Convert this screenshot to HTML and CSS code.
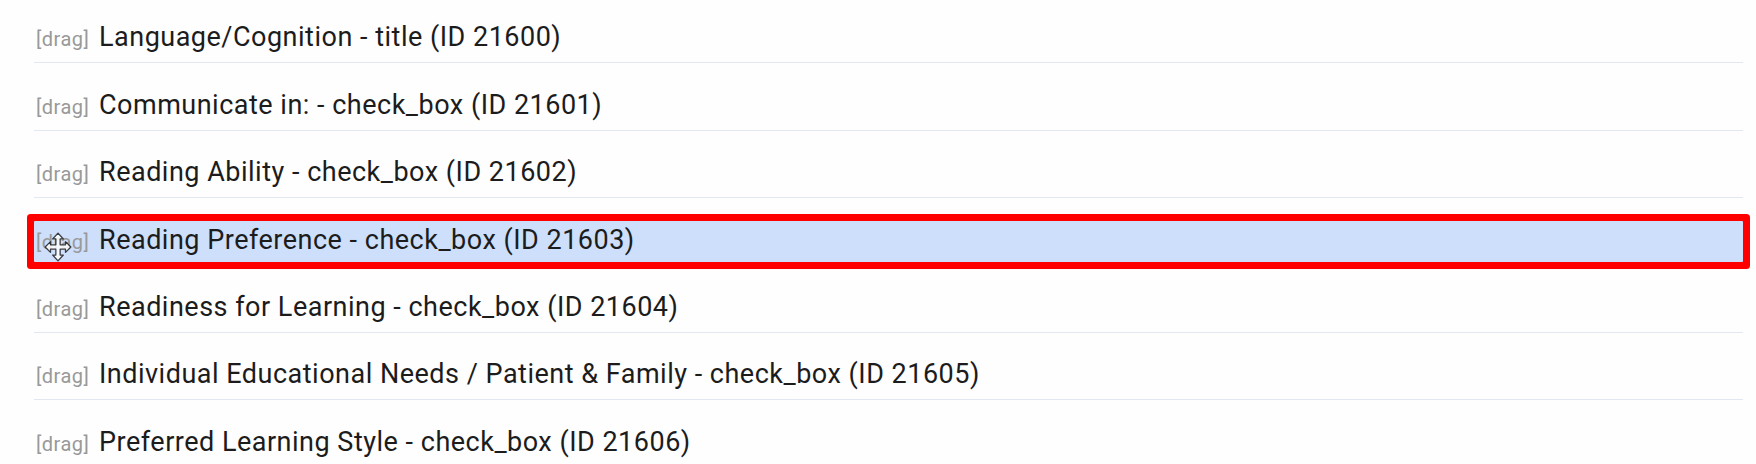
FILE: index.html
```html
<!DOCTYPE html>
<html lang="en">
<head>
<meta charset="utf-8">
<title>Fields</title>
<link rel="stylesheet" href="styles.css">
</head>
<body>
<ul class="list">
  <li class="row"><div class="item"><span class="drag">[drag]</span><span class="label">Language/Cognition - title (ID 21600)</span></div></li>
  <li class="row"><div class="item"><span class="drag">[drag]</span><span class="label">Communicate in: - check_box (ID 21601)</span></div></li>
  <li class="row"><div class="item"><span class="drag">[drag]</span><span class="label">Reading Ability - check_box (ID 21602)</span></div></li>
  <li class="row"><div class="item item-active"><span class="drag">[drag]</span><span class="label">Reading Preference - check_box (ID 21603)</span>
    <svg class="cursor" width="28" height="30" viewBox="0 0 26 28" aria-hidden="true">
      <path d="M13 1 L18 6.5 L15 6.5 L15 12 L20 12 L20 9 L25 14 L20 19 L20 16 L15 16 L15 21.5 L18 21.5 L13 27 L8 21.5 L11 21.5 L11 16 L6 16 L6 19 L1 14 L6 9 L6 12 L11 12 L11 6.5 L8 6.5 Z" fill="#fff" stroke="#222" stroke-width="1.2" stroke-linejoin="round" opacity="0.85"/>
    </svg>
  </div></li>
  <li class="row"><div class="item"><span class="drag">[drag]</span><span class="label">Readiness for Learning - check_box (ID 21604)</span></div></li>
  <li class="row"><div class="item"><span class="drag">[drag]</span><span class="label">Individual Educational Needs / Patient &amp; Family - check_box (ID 21605)</span></div></li>
  <li class="row"><div class="item"><span class="drag">[drag]</span><span class="label">Preferred Learning Style - check_box (ID 21606)</span></div></li>
</ul>
</body>
</html>
```
FILE: styles.css
```css
html, body {
  margin: 0;
  padding: 0;
  background: #fefefe;
}

body {
  font-family: Roboto, "Liberation Sans", sans-serif;
  color: #1c1c1c;
  overflow: hidden;
}

.list {
  list-style: none;
  margin: -4px 0 0 34px;
  padding: 0;
  width: 1709px;
}

.row {
  padding: 22.4px 0 3px;
  border-bottom: 1px solid #e2e8f2;
}

.item {
  position: relative;
  display: flex;
  align-items: baseline;
  padding: 6px 0 9px;
  height: 26px;
}

.item-active {
  background: #cddffb;
  box-shadow: 0 0 0 7px #f00;
  border-radius: 1px;
}

.drag {
  font-size: 20px;
  line-height: 16px;
  letter-spacing: 0.5px;
  color: #999;
  margin-left: 2px;
  width: 63px;
  flex: none;
}

.label {
  font-size: 27px;
  line-height: 26px;
  letter-spacing: 0.5px;
  color: #1c1c1c;
  white-space: nowrap;
}

.cursor {
  position: absolute;
  left: 10px;
  top: 11px;
}
```
